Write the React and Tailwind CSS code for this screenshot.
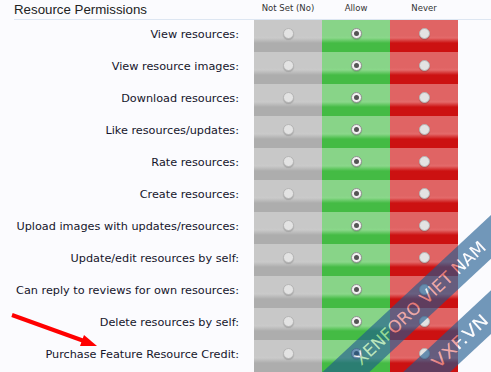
import React from 'react';

const permissions = [
  'View resources:',
  'View resource images:',
  'Download resources:',
  'Like resources/updates:',
  'Rate resources:',
  'Create resources:',
  'Upload images with updates/resources:',
  'Update/edit resources by self:',
  'Can reply to reviews for own resources:',
  'Delete resources by self:',
  'Purchase Feature Resource Credit:',
];

const Radio = ({ checked }) => (
  <div
    className={
      'w-[11px] h-[11px] rounded-full border flex items-center justify-center shadow-[0_1px_1px_rgba(0,0,0,0.15)] ' +
      (checked ? 'bg-[#f2f2f2] border-[#8f8f8f]' : 'bg-[#e3e3e3] border-[#b5b5b5]')
    }
  >
    {checked && <div className="w-[5px] h-[5px] rounded-full bg-[#555555]" />}
  </div>
);

const Row = ({ label }) => (
  <div className="flex h-[32px]">
    <div className="w-[240px] pr-[15px] pt-[8px] text-right text-[11.25px] leading-[14px] text-[#15152b]">
      {label}
    </div>
    <div className="w-[68px] flex justify-center pt-[8px] bg-[linear-gradient(to_bottom,#c8c8c8_0%,#c8c8c8_48%,#cacaca_56%,#adadad_72%,#adadad_100%)]">
      <Radio />
    </div>
    <div className="w-[68px] flex justify-center pt-[8px] bg-[linear-gradient(to_bottom,#88d488_0%,#88d488_48%,#8ad88a_56%,#44bb44_72%,#44bb44_100%)]">
      <Radio checked />
    </div>
    <div className="w-[68px] flex justify-center pt-[8px] bg-[linear-gradient(to_bottom,#e06464_0%,#e06464_48%,#e46a6a_56%,#cc1111_72%,#cc1111_100%)]">
      <Radio />
    </div>
  </div>
);

export default function App() {
  return (
    <div className="relative w-[491px] h-[372px] overflow-hidden bg-[#fbfbfe] font-['DejaVu_Sans',sans-serif]">
      <div className="ml-[14px]">
        <div className="flex h-[20px] border-b border-[#dde6f2]">
          <h3 className="w-[240px] text-[13.3px] leading-[19px] text-[#222222] font-['Liberation_Sans',sans-serif]">
            Resource Permissions
          </h3>
          <div className="w-[68px] text-center text-[8.5px] leading-[17px] text-[#333333]">Not Set (No)</div>
          <div className="w-[68px] text-center text-[8.5px] leading-[17px] text-[#333333]">Allow</div>
          <div className="w-[68px] text-center text-[8.5px] leading-[17px] text-[#333333]">Never</div>
        </div>
        {permissions.map((p) => (
          <Row key={p} label={p} />
        ))}
      </div>

      {/* red arrow pointing at the last row */}
      <svg className="absolute inset-0 pointer-events-none" width="491" height="372">
        <line x1="12" y1="315" x2="84" y2="341" stroke="#ff0000" strokeWidth="4" />
        <polygon points="97,346 80,346 84,335" fill="#ff0000" />
      </svg>

      {/* watermark ribbons */}
      <svg className="absolute inset-0 pointer-events-none" width="491" height="372">
        <defs>
          <mask id="m1">
            <g transform="translate(420 303) rotate(-43)">
              <rect x="-200" y="-16" width="400" height="32" fill="white" />
              <text x="0" y="6" fontSize="17" textLength="172" lengthAdjust="spacingAndGlyphs" textAnchor="middle" fill="black" fontFamily="DejaVu Sans, sans-serif">XENFORO VIET NAM</text>
            </g>
          </mask>
          <mask id="m2">
            <g transform="translate(460 341) rotate(-43)">
              <rect x="-200" y="-16" width="400" height="32" fill="white" />
              <text x="0" y="6" fontSize="17" textLength="70" lengthAdjust="spacingAndGlyphs" textAnchor="middle" fill="black" fontFamily="DejaVu Sans, sans-serif">VXF.VN</text>
            </g>
          </mask>
        </defs>
        <rect width="491" height="372" fill="rgb(28,88,142)" fillOpacity="0.62" mask="url(#m1)" />
        <rect width="491" height="372" fill="rgb(28,88,142)" fillOpacity="0.62" mask="url(#m2)" />
        <g transform="translate(420 303) rotate(-43)">
          <text x="0" y="6" fontSize="17" textLength="172" lengthAdjust="spacingAndGlyphs" textAnchor="middle" fill="white" fillOpacity="0.45" fontFamily="DejaVu Sans, sans-serif">XENFORO VIET NAM</text>
        </g>
        <g transform="translate(460 341) rotate(-43)">
          <text x="0" y="6" fontSize="17" textLength="70" lengthAdjust="spacingAndGlyphs" textAnchor="middle" fill="white" fillOpacity="0.45" fontFamily="DejaVu Sans, sans-serif">VXF.VN</text>
        </g>
      </svg>
    </div>
  );
}
